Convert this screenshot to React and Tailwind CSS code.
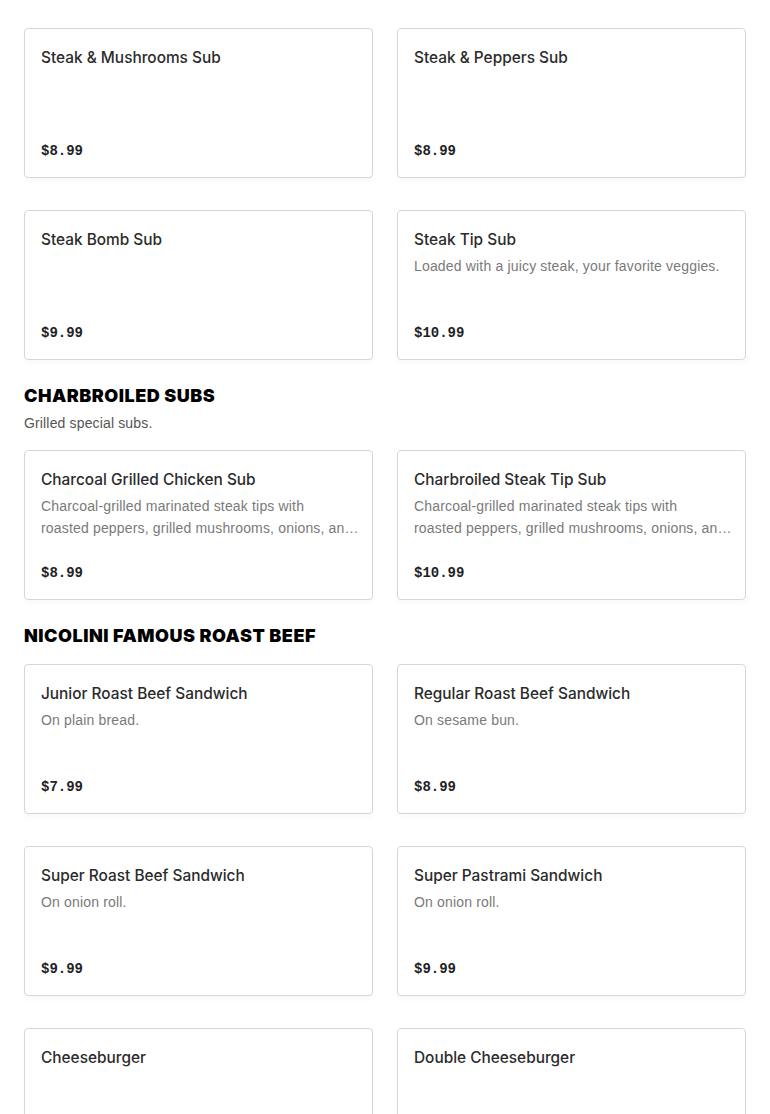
import React from "react";

const longDesc = (
  <>
    Charcoal-grilled marinated steak tips with
    <br />
    roasted peppers, grilled mushrooms, onions, and cheese.
  </>
);

const sections = [
  {
    items: [
      { name: "Steak & Mushrooms Sub", price: "$8.99" },
      { name: "Steak & Peppers Sub", price: "$8.99" },
      { name: "Steak Bomb Sub", price: "$9.99" },
      { name: "Steak Tip Sub", desc: "Loaded with a juicy steak, your favorite veggies.", price: "$10.99" },
    ],
  },
  {
    title: "CHARBROILED SUBS",
    subtitle: "Grilled special subs.",
    items: [
      { name: "Charcoal Grilled Chicken Sub", desc: longDesc, price: "$8.99" },
      { name: "Charbroiled Steak Tip Sub", desc: longDesc, price: "$10.99" },
    ],
  },
  {
    title: "NICOLINI FAMOUS ROAST BEEF",
    items: [
      { name: "Junior Roast Beef Sandwich", desc: "On plain bread.", price: "$7.99" },
      { name: "Regular Roast Beef Sandwich", desc: "On sesame bun.", price: "$8.99" },
      { name: "Super Roast Beef Sandwich", desc: "On onion roll.", price: "$9.99" },
      { name: "Super Pastrami Sandwich", desc: "On onion roll.", price: "$9.99" },
      { name: "Cheeseburger", price: "$6.99" },
      { name: "Double Cheeseburger", price: "$8.99" },
    ],
  },
];

function Card({ item }) {
  return (
    <div className="flex h-[150px] flex-col rounded-[4px] border border-[#d6d6d6] bg-white px-4 pt-[17px] pb-[15px] shadow-[0_4px_4px_rgba(0,0,0,0.025)]">
      <div
        className="text-[15.4px] leading-6 font-medium text-[#2b2b2b]"
        style={{ fontFamily: "Inter, 'Noto Sans', sans-serif" }}
      >
        {item.name}
      </div>
      {item.desc && (
        <div
          className="mt-[3px] mr-[-4px] line-clamp-2 text-[14px] leading-[22px] tracking-[0.17px] text-[#7a7a7a]"
          style={{ fontFamily: "'Liberation Sans', Arial, sans-serif" }}
        >
          {item.desc}
        </div>
      )}
      <div
        className="mt-auto text-[14px] leading-[22px] font-bold text-[#222]"
        style={{ fontFamily: "'Liberation Mono', 'DejaVu Sans Mono', monospace" }}
      >
        {item.price}
      </div>
    </div>
  );
}

export default function App() {
  return (
    <div className="h-[1114px] overflow-hidden bg-white px-6 pt-7">
      {sections.map((s, i) => (
        <div key={i} className={i > 0 ? "mt-6" : ""}>
          {s.title && (
            <div className="mb-4">
              <h2
                className="text-[18px] leading-6 font-black tracking-[0.5px] text-black"
                style={{ fontFamily: "Inter, 'Liberation Sans', sans-serif" }}
              >
                {s.title}
              </h2>
              {s.subtitle && (
                <p
                  className="mt-1 text-[14px] leading-[22px] tracking-[0.15px] text-[#555]"
                  style={{ fontFamily: "'Liberation Sans', Arial, sans-serif" }}
                >
                  {s.subtitle}
                </p>
              )}
            </div>
          )}
          <div className="grid grid-cols-2 gap-x-6 gap-y-8">
            {s.items.map((it, j) => (
              <Card key={j} item={it} />
            ))}
          </div>
        </div>
      ))}
    </div>
  );
}
